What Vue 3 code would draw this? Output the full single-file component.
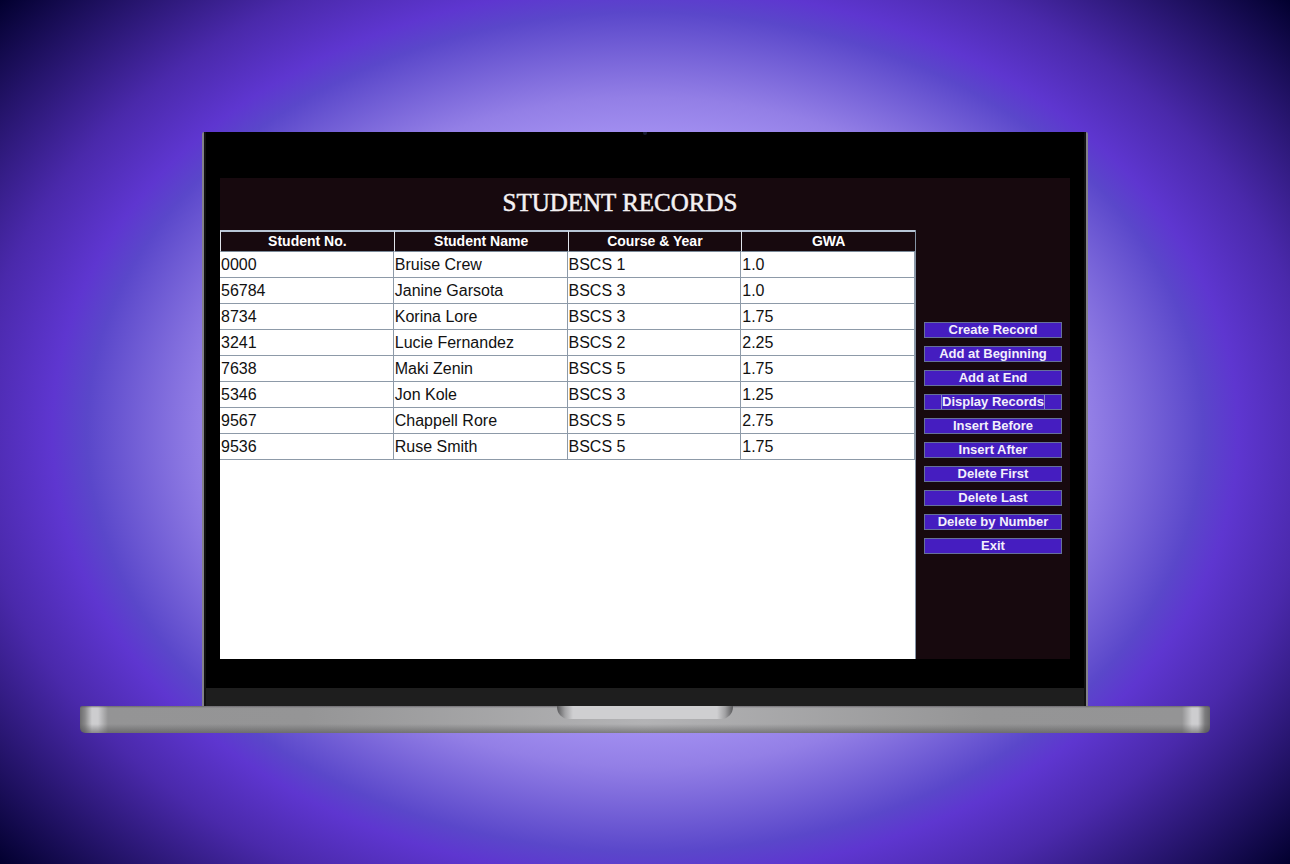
<script setup>
const columns = ['Student No.', 'Student Name', 'Course & Year', 'GWA']

const students = [
  ['0000', 'Bruise Crew', 'BSCS 1', '1.0'],
  ['56784', 'Janine Garsota', 'BSCS 3', '1.0'],
  ['8734', 'Korina Lore', 'BSCS 3', '1.75'],
  ['3241', 'Lucie Fernandez', 'BSCS 2', '2.25'],
  ['7638', 'Maki Zenin', 'BSCS 5', '1.75'],
  ['5346', 'Jon Kole', 'BSCS 3', '1.25'],
  ['9567', 'Chappell Rore', 'BSCS 5', '2.75'],
  ['9536', 'Ruse Smith', 'BSCS 5', '1.75'],
]

const actions = [
  'Create Record',
  'Add at Beginning',
  'Add at End',
  'Display Records',
  'Insert Before',
  'Insert After',
  'Delete First',
  'Delete Last',
  'Delete by Number',
  'Exit',
]
const current = 'Display Records'
</script>

<template>
  <div class="stage">
    <div class="laptop">
      <div class="lid">
        <div class="bezel">
          <span class="camera"></span>
          <main class="screen">
            <header class="title-bar">
              <h1>STUDENT RECORDS</h1>
            </header>
            <div class="body">
              <section class="pane">
                <table>
                  <thead>
                    <tr>
                      <th v-for="c in columns" :key="c" scope="col">{{ c }}</th>
                    </tr>
                  </thead>
                  <tbody>
                    <tr v-for="s in students" :key="s[0]">
                      <td v-for="(v, i) in s" :key="i">{{ v }}</td>
                    </tr>
                  </tbody>
                </table>
              </section>
              <nav class="actions" aria-label="Record actions">
                <button v-for="a in actions" :key="a" type="button" :class="{ current: a === current }">
                  <span>{{ a }}</span>
                </button>
              </nav>
            </div>
          </main>
        </div>
        <div class="chin"></div>
      </div>
      <div class="base">
        <div class="notch"></div>
      </div>
    </div>
  </div>
</template>

<style>
body {
  margin: 0;
}
</style>

<style scoped>
.stage {
  box-sizing: border-box;
  min-height: 100vh;
  padding: 132px 80px 131px;
  display: flex;
  flex-direction: column;
  background: radial-gradient(
    ellipse 872px 656px at center,
    #b3a0fa 0%,
    #a592f3 44%,
    #937fe6 51%,
    #5a47ca 64%,
    #5e36d0 68%,
    #4a29ab 77%,
    #02002f 99%
  );
  font-family: "Liberation Sans", Arial, sans-serif;
}

.laptop {
  flex: 1;
  display: flex;
  flex-direction: column;
}

.lid {
  flex: 1;
  display: flex;
  flex-direction: column;
  margin: 0 122px;
  border: solid #83818a;
  border-width: 0 2px;
  border-radius: 2px 2px 0 0;
  background: #111;
}

.bezel {
  position: relative;
  flex: 1;
  display: flex;
  flex-direction: column;
  margin: 0 2px;
  padding: 46px 14px 29px;
  background: #000;
}

.camera {
  position: absolute;
  top: 0;
  left: 50%;
  width: 4px;
  height: 3px;
  margin-left: -2px;
  border-radius: 0 0 2px 2px;
  background: #171b30;
}

.screen {
  flex: 1;
  display: flex;
  flex-direction: column;
  background: #17090e;
}

.title-bar {
  padding: 10px 50px 12px 0;
}

h1 {
  margin: 0;
  font-family: "Liberation Serif", "Times New Roman", serif;
  font-size: 25px;
  line-height: 30px;
  font-weight: 400;
  text-align: center;
  color: #f4f1f2;
  -webkit-text-stroke: 0.5px #f4f1f2;
}

.body {
  flex: 1;
  display: flex;
}

.pane {
  flex: 1;
  border-right: 1px solid #8594a5;
  background: #fff;
}

table {
  width: 100%;
  table-layout: fixed;
  border-collapse: separate;
  border-spacing: 0;
}

th {
  box-sizing: border-box;
  height: 22px;
  padding: 0;
  border: solid #dfe3ea;
  border-width: 2px 0 1px 1px;
  border-top-color: #b8c6d6;
  border-bottom-color: #7a8a99;
  background: #17090e;
  font-size: 14px;
  line-height: 19px;
  font-weight: 700;
  color: #fff;
}

td {
  box-sizing: border-box;
  height: 26px;
  padding: 0 0 0 1px;
  border: solid #8d9aa8;
  border-width: 0 1px 1px 0;
  font-size: 16px;
  line-height: 25px;
  color: #111;
}

.actions {
  display: flex;
  flex-direction: column;
  gap: 8px;
  width: 138px;
  padding: 92px 8px 8px;
}

button {
  box-sizing: border-box;
  height: 16px;
  padding: 0;
  border: 1px solid #66709a;
  background: #451dc0;
  font: 700 13px/14px "Liberation Sans", Arial, sans-serif;
  color: #f3effc;
}

button span {
  display: inline-block;
}

.current span {
  box-shadow: -1px 0 #8b86c8, 1px 0 #8b86c8;
}

.chin {
  height: 18px;
  margin: 0 2px;
  background: #1e1e1e;
}

.base {
  height: 27px;
  border-radius: 2px 2px 5px 5px;
  background:
    linear-gradient(rgba(80, 76, 84, 0.6), transparent 2px 18px, rgba(70, 70, 72, 0.5)),
    linear-gradient(
      90deg,
      #6c6c6e 0,
      #8a8a8b 5px,
      #cdcdcf 12px,
      #cdcdcf 18px,
      #949495 28px,
      #959596 20%,
      #b3b3b5 50%,
      #959596 80%,
      #949495 calc(100% - 28px),
      #cdcdcf calc(100% - 18px),
      #cdcdcf calc(100% - 12px),
      #7c7c7e calc(100% - 5px),
      #68686a 100%
    );
}

.notch {
  width: 176px;
  height: 13px;
  margin: 0 auto;
  border-radius: 0 0 12px 12px;
  background: linear-gradient(
    90deg,
    #58585a 0,
    #a2a2a4 8px,
    #cfcfd1 16px,
    #cfcfd1 calc(100% - 16px),
    #a2a2a4 calc(100% - 8px),
    #58585a 100%
  );
}
</style>
